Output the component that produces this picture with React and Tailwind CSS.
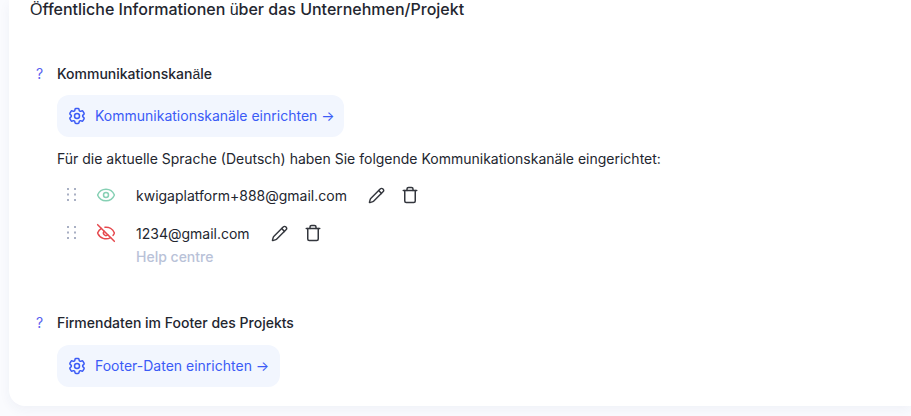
import React from "react";
import { Eye, EyeOff, Pencil, Trash } from "lucide-react";

function Dots() {
  return (
    <svg width="10" height="16" viewBox="0 0 10 16" className="text-[#a9b0c4] shrink-0">
      {[1, 6.5, 12].map((y) => (
        <g key={y} fill="currentColor">
          <rect x="0" y={y} width="2" height="2" />
          <rect x="7" y={y} width="2" height="2" />
        </g>
      ))}
    </svg>
  );
}

function Cog() {
  return (
    <svg width="20" height="20" viewBox="0 0 24 24" fill="none" stroke="currentColor" strokeWidth="1.8" strokeLinecap="round" strokeLinejoin="round" className="mr-2 shrink-0">
      <path d="M9.594 3.94c.09-.542.56-.94 1.11-.94h2.593c.55 0 1.02.398 1.11.94l.213 1.281c.063.374.313.686.645.87.074.04.147.083.22.127.325.196.72.257 1.075.124l1.217-.456a1.125 1.125 0 0 1 1.37.49l1.296 2.247a1.125 1.125 0 0 1-.26 1.431l-1.003.827c-.293.241-.438.613-.43.992a7.723 7.723 0 0 1 0 .255c-.008.378.137.75.43.991l1.004.827c.424.35.534.955.26 1.43l-1.298 2.247a1.125 1.125 0 0 1-1.369.491l-1.217-.456c-.355-.133-.75-.072-1.076.124a6.47 6.47 0 0 1-.22.128c-.331.183-.581.495-.644.869l-.213 1.281c-.09.543-.56.94-1.11.94h-2.594c-.55 0-1.019-.398-1.11-.94l-.213-1.281c-.062-.374-.312-.686-.644-.87a6.52 6.52 0 0 1-.22-.127c-.325-.196-.72-.257-1.076-.124l-1.217.456a1.125 1.125 0 0 1-1.369-.49l-1.297-2.247a1.125 1.125 0 0 1 .26-1.431l1.004-.827c.292-.24.437-.613.43-.991a6.932 6.932 0 0 1 0-.255c.007-.38-.138-.751-.43-.992l-1.004-.827a1.125 1.125 0 0 1-.26-1.43l1.297-2.247a1.125 1.125 0 0 1 1.37-.491l1.216.456c.356.133.751.072 1.076-.124.072-.044.146-.086.22-.128.332-.183.582-.495.644-.869l.214-1.28Z" />
      <path d="M15 12a3 3 0 1 1-6 0 3 3 0 0 1 6 0Z" />
    </svg>
  );
}

function Fb({ children }) {
  return <span className="font-['Liberation_Sans'] font-normal">{children}</span>;
}

function SectionTitle({ children }) {
  return (
    <div className="flex items-center h-5">
      <span className="w-[27px] pl-[6px] text-sm text-[#5b5ff0] leading-5">?</span>
      <span className="text-sm font-medium text-[#23262f] leading-5">{children}</span>
    </div>
  );
}

function SetupLink({ children, className }) {
  return (
    <a className={"flex items-center w-fit h-[42px] rounded-xl bg-[#f2f6fe] pl-[10px] text-sm text-[#3b5bf6] " + className}>
      <Cog />
      {children}
    </a>
  );
}

function Channel({ off, email, note }) {
  return (
    <div className="flex items-start">
      <div className="w-[39px] pl-[10px] pt-[3px]">
        <Dots />
      </div>
      <div className="w-10 pt-[1px]">
        {off ? (
          <EyeOff size={20} strokeWidth={1.8} className="text-[#e5484d]" />
        ) : (
          <Eye size={20} strokeWidth={1.8} className="text-[#86d0b4]" />
        )}
      </div>
      <div>
        <div className="flex items-center h-[22px]">
          <span className="text-sm text-[#23262f] relative top-px">{email}</span>
          <Pencil size={17} strokeWidth={2} className="ml-[21px] text-[#33363d]" />
          <Trash size={18} strokeWidth={2} className="ml-4 text-[#33363d]" />
        </div>
        {note && <div className="text-sm font-medium text-[#b9c2d8] leading-5 mt-[3px]">{note}</div>}
      </div>
    </div>
  );
}

export default function App() {
  return (
    <div className="w-[911px] h-[416px] overflow-hidden bg-[#fafbfe] pl-[9px] font-['Inter',sans-serif]">
      <div className="h-[406px] bg-white rounded-bl-2xl shadow-[0_4px_12px_rgba(40,60,120,0.05)] pl-[21px]">
        <div className="text-base font-medium text-[#23262f] leading-[18px] h-[19px]">
          <Fb>Ö</Fb>ffentliche Informationen <Fb>ü</Fb>ber das Unternehmen/Projekt
        </div>
        <div className="pt-[45px]">
          <SectionTitle>Kommunikationskan<Fb>ä</Fb>le</SectionTitle>
          <div className="pl-[27px]">
            <SetupLink className="mt-[11px] pr-[9px]">Kommunikationskanäle einrichten →</SetupLink>
            <p className="text-sm text-[#23262f] leading-5 mt-3">
              Für die aktuelle Sprache (Deutsch) haben Sie folgende Kommunikationskanäle eingerichtet:
            </p>
            <div className="mt-[15px] flex flex-col gap-4">
              <Channel email="kwigaplatform+888@gmail.com" />
              <Channel off email="1234@gmail.com" note="Help centre" />
            </div>
          </div>
        </div>
        <div className="pt-[46px]">
          <SectionTitle>Firmendaten im Footer des Projekts</SectionTitle>
          <div className="pl-[27px]">
            <SetupLink className="mt-3 pr-[11px]">Footer-Daten einrichten →</SetupLink>
          </div>
        </div>
      </div>
    </div>
  );
}
